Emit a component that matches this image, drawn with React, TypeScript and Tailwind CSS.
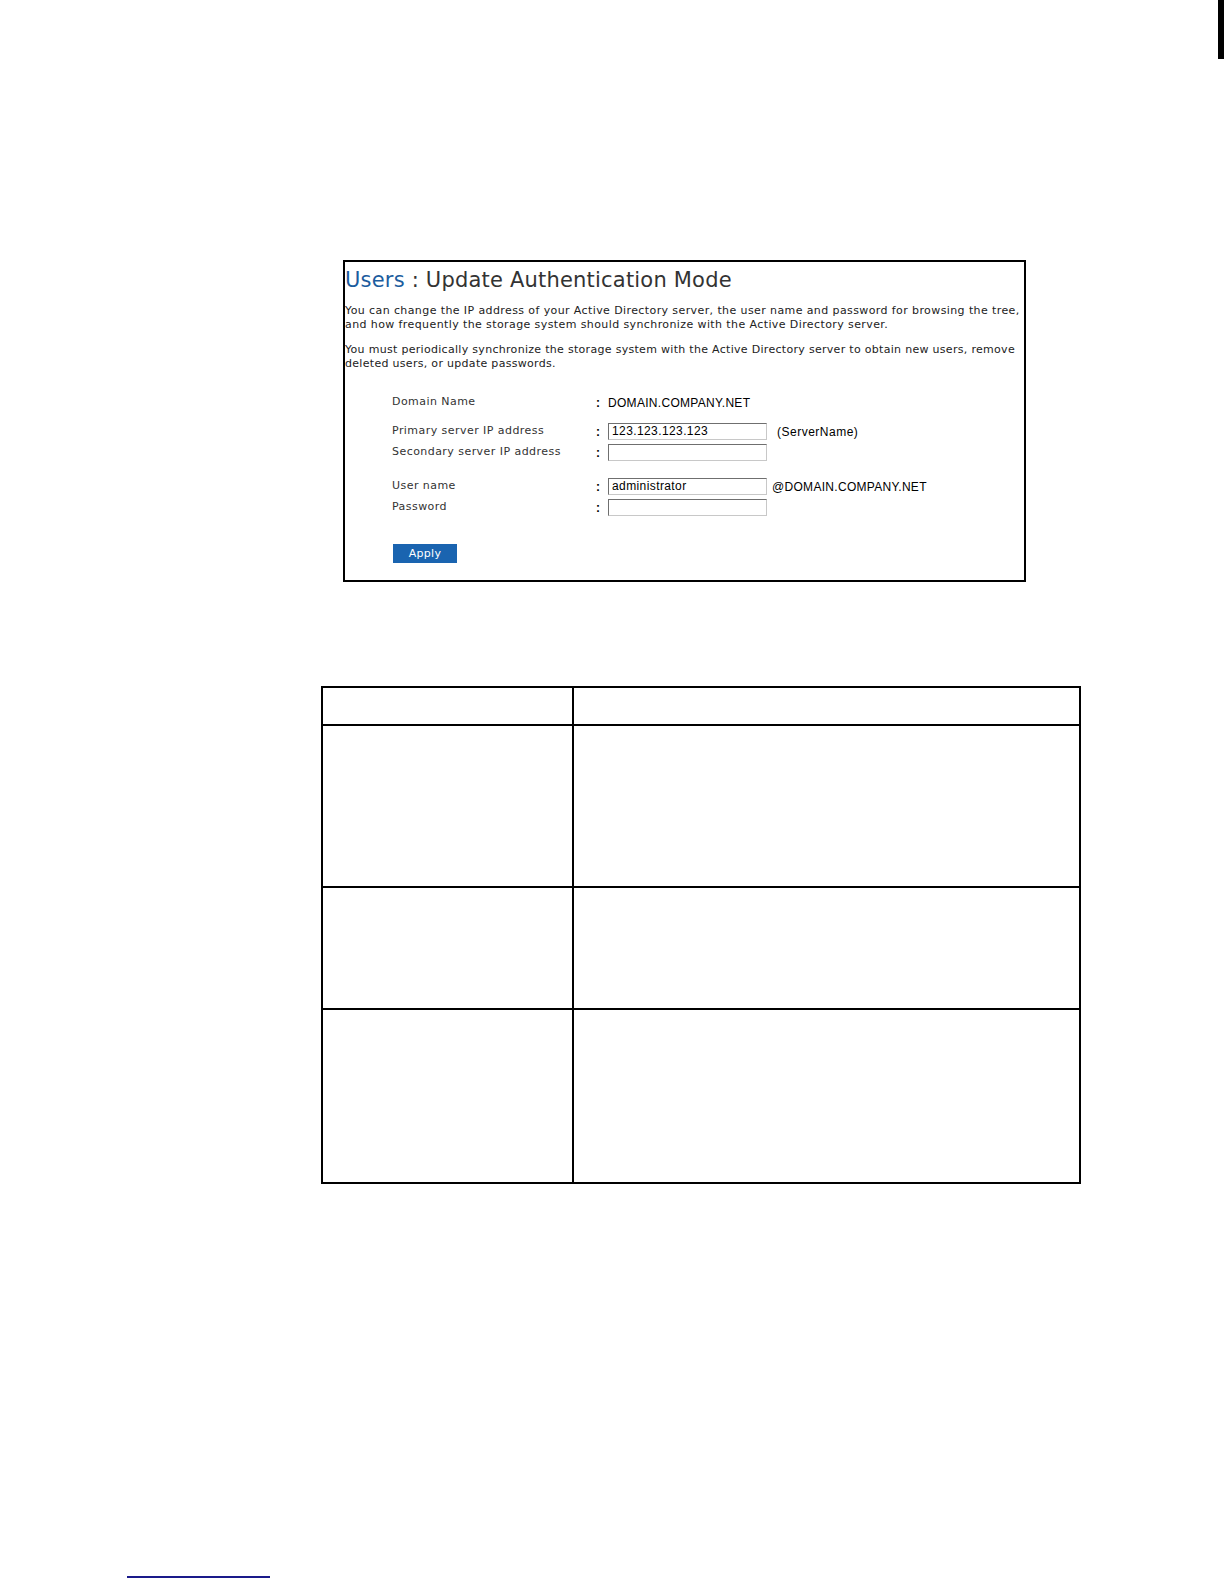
// Manual page: "Update Authentication Mode" screenshot with an empty field table below

const verdana = { fontFamily: '"DejaVu Sans", Verdana, sans-serif' };
const arial = { fontFamily: '"Liberation Sans", Arial, sans-serif' };

const FieldRow = ({
	label,
	children,
	className = "",
}: {
	label: string;
	children: React.ReactNode;
	className?: string;
}) => (
	<div className={`flex items-center h-[21px] ${className}`}>
		<span className="w-[204px] text-[11px] tracking-[0.45px] text-[#333]" style={verdana}>
			{label}
		</span>
		<span className="w-[12px] text-[12px] text-black font-bold" style={arial}>
			:
		</span>
		<div className="flex items-center">{children}</div>
	</div>
);

const TextBox = ({ value = "" }: { value?: string }) => (
	<div
		className="w-[159px] h-[17px] bg-white border border-[#c8c8c8] border-t-[#6f6f6f] border-l-[#6f6f6f] text-[12px] tracking-[0.4px] text-black px-[3px] leading-[15px]"
		style={arial}
	>
		{value}
	</div>
);

const AuthPanel = () => (
	<div className="ml-[343px] w-[683px] h-[322px] border-2 border-black bg-white flex flex-col">
		<h1 className="text-[21px] leading-[26px] mt-[5px] text-[#333] tracking-[0.2px]" style={verdana}>
			<span className="text-[#1b5c9e]">Users</span> : Update Authentication Mode
		</h1>

		<div
			className="text-[11px] tracking-[0.4px] leading-[14px] text-[#222] mt-[11px] whitespace-nowrap"
			style={verdana}
		>
			<p>
				You can change the IP address of your Active Directory server, the user name and password for browsing the tree,
				<br />
				and how frequently the storage system should synchronize with the Active Directory server.
			</p>
			<p className="mt-[11px] tracking-[0.3px]">
				You must periodically synchronize the storage system with the Active Directory server to obtain new users, remove
				<br />
				deleted users, or update passwords.
			</p>
		</div>

		<div className="ml-[47px] mt-[21px] flex flex-col">
			<FieldRow label="Domain Name">
				<span className="text-[12px] tracking-[0.3px] text-black" style={arial}>
					DOMAIN.COMPANY.NET
				</span>
			</FieldRow>
			<FieldRow label="Primary server IP address" className="mt-[8px]">
				<TextBox value="123.123.123.123" />
				<span className="ml-[10px] text-[12px] tracking-[0.5px] text-black" style={arial}>
					(ServerName)
				</span>
			</FieldRow>
			<FieldRow label="Secondary server IP address">
				<TextBox />
			</FieldRow>
			<FieldRow label="User name" className="mt-[13px]">
				<TextBox value="administrator" />
				<span className="ml-[5px] text-[12px] tracking-[0.3px] text-black" style={arial}>
					@DOMAIN.COMPANY.NET
				</span>
			</FieldRow>
			<FieldRow label="Password">
				<TextBox />
			</FieldRow>

			<button
				type="button"
				className="mt-[26px] ml-[1px] w-[64px] h-[19px] bg-[#1a64b0] text-white text-[11px] tracking-[0.3px] leading-[19px] text-center"
				style={verdana}
			>
				Apply
			</button>
		</div>
	</div>
);

const rows = [38, 162, 122, 174];

const FieldTable = () => (
	<table className="ml-[321px] mt-[104px] w-[760px] border-collapse">
		<tbody>
			{rows.map((h, i) => (
				<tr key={i} style={{ height: h }}>
					<td className="w-[251px] border-2 border-black" />
					<td className="border-2 border-black" />
				</tr>
			))}
		</tbody>
	</table>
);

export default function App() {
	return (
		<div className="w-[1224px] h-[1584px] bg-white flex flex-col">
			<div className="h-[59px] flex justify-end">
				<div className="w-[6px] h-full bg-black" />
			</div>
			<div className="mt-[201px]">
				<AuthPanel />
			</div>
			<FieldTable />
			<div className="mt-[392px] ml-[127px] w-[143px] h-[2px] bg-[#1a1a8a]" />
		</div>
	);
}
